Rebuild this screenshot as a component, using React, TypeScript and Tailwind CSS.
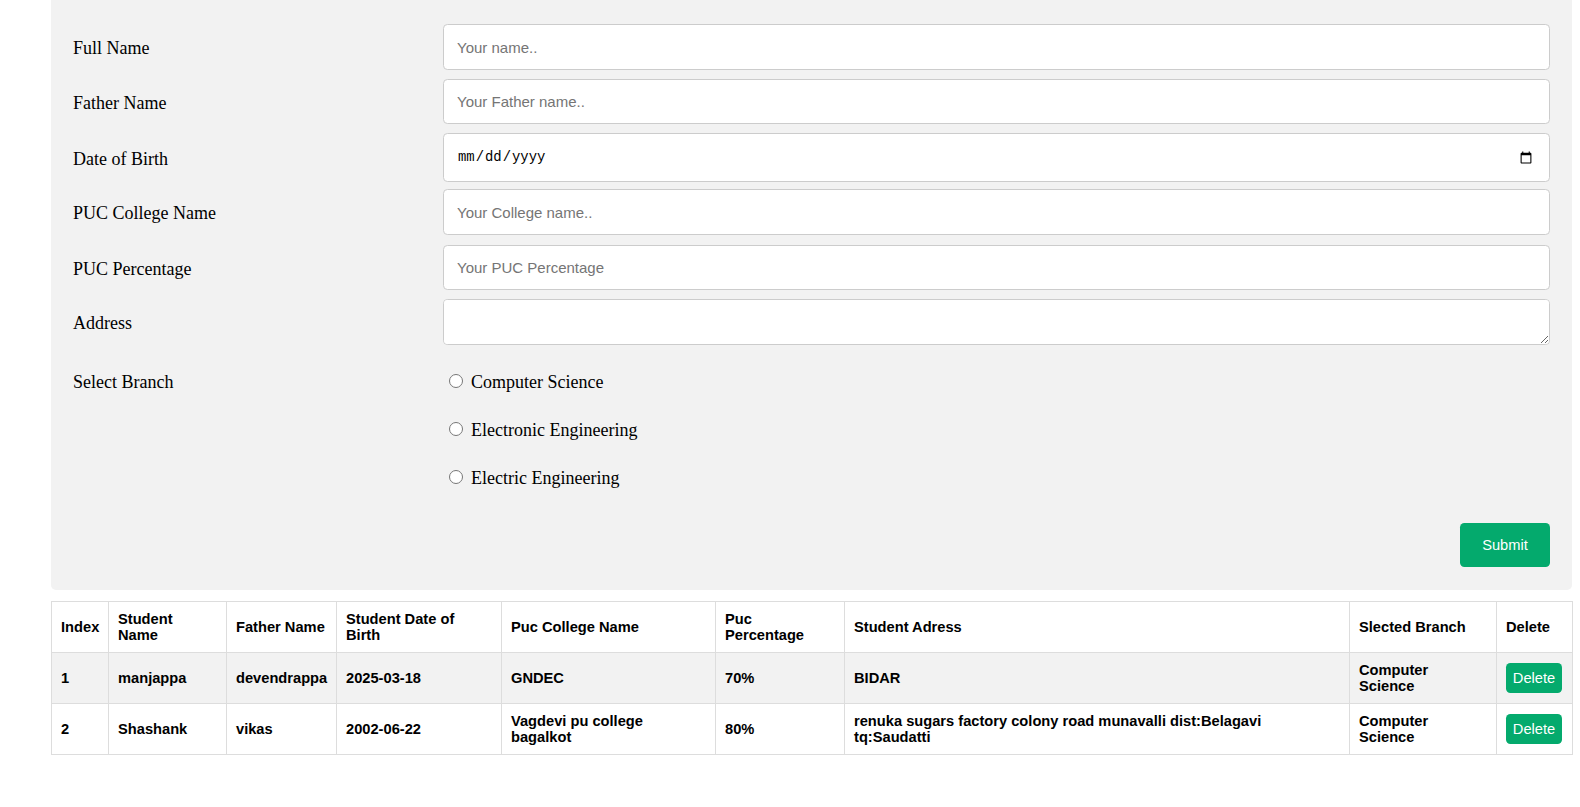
import React from "react";

const inputCls =
  "w-full h-[45px] bg-white border border-[#cccccc] rounded-[4.4px] px-[13px] text-[15px] text-black font-['Liberation_Sans',Arial,sans-serif] placeholder:text-[#757575] outline-none";

function Row({ label, children, mt }: { label: string; children: React.ReactNode; mt: string }) {
  return (
    <div className={`flex items-center ${mt}`}>
      <div className="w-[370px] shrink-0 text-[18px] leading-[20px] text-black font-['Liberation_Serif','Times_New_Roman',serif] translate-y-[0.5px]">
        {label}
      </div>
      <div className="flex-1">{children}</div>
    </div>
  );
}

const rows = [
  {
    idx: "1",
    name: "manjappa",
    father: "devendrappa",
    dob: "2025-03-18",
    college: <>GNDEC</>,
    pct: "70%",
    addr: <>BIDAR</>,
  },
  {
    idx: "2",
    name: "Shashank",
    father: "vikas",
    dob: "2002-06-22",
    college: (
      <>
        Vagdevi pu college
        <br />
        bagalkot
      </>
    ),
    pct: "80%",
    addr: (
      <>
        renuka sugars factory colony road munavalli dist:Belagavi
        <br />
        tq:Saudatti
      </>
    ),
  },
];

export default function App() {
  const cell = "border border-[#dddddd] pl-[9px] pr-[8px] align-middle text-left whitespace-nowrap";
  return (
    <div className="min-h-[807px] bg-white font-['Liberation_Sans',Arial,sans-serif]">
      <div className="ml-[51px] w-[1521px] bg-[#f2f2f2] rounded-b-[5px] px-[22px] pt-[24px] pb-[23px]">
        <Row label="Full Name" mt="mt-0">
          <input className={inputCls + " h-[46px]"} placeholder="Your name.." />
        </Row>
        <Row label="Father Name" mt="mt-[9px]">
          <input className={inputCls} placeholder="Your Father name.." />
        </Row>
        <Row label="Date of Birth" mt="mt-[9px]">
          <input
            type="date"
            className="w-full h-[49px] bg-white border border-[#cccccc] rounded-[4.4px] pl-[13px] pr-[14px] text-[13.9px] text-black font-['Liberation_Mono','Courier_New',monospace] outline-none"
          />
        </Row>
        <Row label="PUC College Name" mt="mt-[7px]">
          <input className={inputCls + " h-[46px]"} placeholder="Your College name.." />
        </Row>
        <Row label="PUC Percentage" mt="mt-[10px]">
          <input className={inputCls} placeholder="Your PUC Percentage" />
        </Row>
        <Row label="Address" mt="mt-[9px]">
          <textarea className="block w-full h-[46px] bg-white border border-[#cccccc] rounded-[4.4px] px-[13px] py-[12px] text-[15px] font-['Liberation_Sans',Arial,sans-serif] resize-y outline-none" />
        </Row>
        <div className="flex items-start mt-[12px]">
          <div className="w-[370px] shrink-0 h-[48px] flex items-center text-[18px] leading-[20px] text-black font-['Liberation_Serif','Times_New_Roman',serif] translate-y-[1px]">
            Select Branch
          </div>
          <div className="flex-1 flex flex-col">
            {["Computer Science", "Electronic Engineering", "Electric Engineering"].map((b) => (
              <label
                key={b}
                className="h-[48px] flex items-center text-[18px] leading-[20px] text-black font-['Liberation_Serif','Times_New_Roman',serif] translate-y-[1px]"
              >
                <input type="radio" name="branch" className="ml-[6px] mr-[8px] w-[14px] h-[14px] -translate-y-[1px]" />
                {b}
              </label>
            ))}
          </div>
        </div>
        <div className="flex justify-end mt-[22px]">
          <button className="w-[90px] h-[44px] bg-[#04AA6D] text-white rounded-[4.4px] text-[14.67px] font-['Liberation_Sans',Arial,sans-serif]">
            Submit
          </button>
        </div>
      </div>

      <table className="ml-[51px] mt-[11px] w-[1521px] table-fixed border-collapse text-[14.67px] leading-[16.5px] font-bold text-black font-['Liberation_Sans',Arial,sans-serif]">
        <colgroup>
          <col className="w-[57px]" />
          <col className="w-[118px]" />
          <col className="w-[110px]" />
          <col className="w-[165px]" />
          <col className="w-[214px]" />
          <col className="w-[129px]" />
          <col className="w-[505px]" />
          <col className="w-[147px]" />
          <col className="w-[76px]" />
        </colgroup>
        <thead>
          <tr className="h-[51px] bg-white">
            <th className={cell}>Index</th>
            <th className={cell}>
              Student
              <br />
              Name
            </th>
            <th className={cell}>Father Name</th>
            <th className={cell}>
              Student Date of
              <br />
              Birth
            </th>
            <th className={cell}>Puc College Name</th>
            <th className={cell}>
              Puc
              <br />
              Percentage
            </th>
            <th className={cell}>Student Adress</th>
            <th className={cell}>Slected Branch</th>
            <th className={cell}>Delete</th>
          </tr>
        </thead>
        <tbody>
          {rows.map((r, i) => (
            <tr key={r.idx} className={`h-[51px] ${i === 0 ? "bg-[#f2f2f2]" : "bg-white"}`}>
              <td className={cell}>{r.idx}</td>
              <td className={cell}>{r.name}</td>
              <td className={cell}>{r.father}</td>
              <td className={cell}>{r.dob}</td>
              <td className={cell}>{r.college}</td>
              <td className={cell}>{r.pct}</td>
              <td className={cell}>{r.addr}</td>
              <td className={cell}>
                Computer
                <br />
                Science
              </td>
              <td className={cell}>
                <button className="w-[56px] h-[30px] bg-[#04AA6D] text-white rounded-[4.4px] text-[14.67px] font-normal">
                  Delete
                </button>
              </td>
            </tr>
          ))}
        </tbody>
      </table>
    </div>
  );
}
